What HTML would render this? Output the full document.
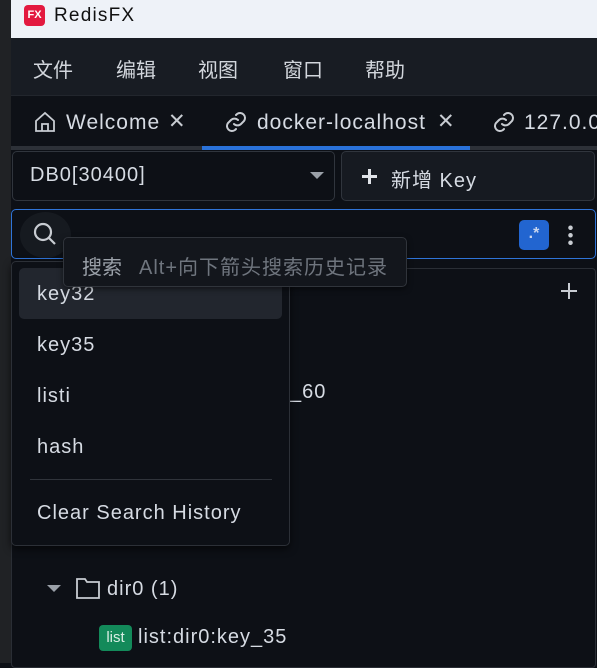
<!DOCTYPE html>
<html><head><meta charset="utf-8"><style>
*{box-sizing:border-box;margin:0;padding:0}
body{width:597px;height:663px;overflow:hidden;background:#0d1016;font-family:"Liberation Sans","Noto Sans CJK SC",sans-serif;color:#d6dbe3;position:relative}
.abs{position:absolute}
.t{font-size:20px;letter-spacing:1px}
</style></head><body>
<div class="abs" style="left:0;top:0;width:11px;height:663px;background:#202225"></div>
<div class="abs" style="left:11px;top:0;width:586px;height:38px;background:#eef2f8"></div>
<div class="abs" style="left:24px;top:5px;width:21px;height:21px;background:#e3193f;border-radius:4px;color:#fff;font-size:11px;font-weight:bold;text-align:center;line-height:21px">FX</div>
<div class="abs" style="left:54px;top:4px;font-size:19px;letter-spacing:1.2px;color:#111;line-height:24px">RedisFX</div>
<div class="abs" style="left:11px;top:38px;width:586px;height:57px;background:#181c23;font-size:20px;color:#d2d6dc">
<span class="abs" style="left:22px;top:16px">文件</span><span class="abs" style="left:105px;top:16px">编辑</span><span class="abs" style="left:187px;top:16px">视图</span><span class="abs" style="left:272px;top:16px">窗口</span><span class="abs" style="left:354px;top:16px">帮助</span></div>
<div class="abs" style="left:11px;top:95px;width:586px;height:52px;background:#0e1117;border-top:1px solid #22262d"></div>
<div class="abs" style="left:11px;top:146px;width:586px;height:4px;background:#2d3138"></div>
<div class="abs" style="left:202px;top:146px;width:268px;height:4px;background:#2a72d9"></div>
<svg class="abs" style="left:33px;top:110px" width="24" height="24" viewBox="0 0 24 24" fill="none" stroke="#c8ccd2" stroke-width="1.8"><path d="M3 11L12 3l9 8v10H3z M9 21v-7h6v7"/></svg>
<div class="abs t" style="left:66px;top:111px;font-size:21px">Welcome</div>
<div class="abs" style="left:168px;top:109px;font-size:21px;color:#c8ccd2">✕</div>
<svg class="abs" style="left:224px;top:110px" width="24" height="24" viewBox="0 0 24 24" fill="none" stroke="#c8ccd2" stroke-width="2" stroke-linecap="round"><path d="M10 14a5 5 0 0 0 7 0l3-3a5 5 0 0 0-7-7l-1 1M14 10a5 5 0 0 0-7 0l-3 3a5 5 0 0 0 7 7l1-1"/></svg>
<div class="abs t" style="left:257px;top:111px;font-size:21px">docker-localhost</div>
<div class="abs" style="left:437px;top:109px;font-size:21px;color:#c8ccd2">✕</div>
<svg class="abs" style="left:492px;top:110px" width="24" height="24" viewBox="0 0 24 24" fill="none" stroke="#c8ccd2" stroke-width="2" stroke-linecap="round"><path d="M10 14a5 5 0 0 0 7 0l3-3a5 5 0 0 0-7-7l-1 1M14 10a5 5 0 0 0-7 0l-3 3a5 5 0 0 0 7 7l1-1"/></svg>
<div class="abs t" style="left:524px;top:111px;font-size:21px">127.0.0</div>
<div class="abs" style="left:12px;top:151px;width:323px;height:50px;border:1px solid #30353d;border-radius:5px;background:#0d1016"></div>
<div class="abs t" style="left:30px;top:164px">DB0[30400]</div>
<div class="abs" style="left:310px;top:172px;width:0;height:0;border-left:7px solid transparent;border-right:7px solid transparent;border-top:7px solid #9aa0a8"></div>
<div class="abs" style="left:341px;top:151px;width:254px;height:50px;border:1px solid #30353d;border-radius:5px;background:#161a21"></div>
<div class="abs" style="left:362px;top:175px;width:15px;height:3px;background:#e0e3e8"></div>
<div class="abs" style="left:368px;top:169px;width:3px;height:15px;background:#e0e3e8"></div>
<div class="abs t" style="left:391px;top:164px">新增 Key</div>
<div class="abs" style="left:11px;top:209px;width:585px;height:50px;border:1px solid #2f74d8;border-radius:5px;background:#0d1016"></div>
<div class="abs" style="left:20px;top:212px;width:51px;height:46px;border-radius:50%;background:#161a20"></div>
<svg class="abs" style="left:32px;top:221px" width="26" height="26" viewBox="0 0 26 26" fill="none" stroke="#c8ccd2" stroke-width="2.2"><circle cx="11" cy="11" r="8"/><path d="M17 17l6 6"/></svg>
<div class="abs" style="left:519px;top:220px;width:30px;height:30px;background:#2265d0;border-radius:5px;color:#c9d6ef;font-size:16px;font-weight:bold;text-align:center;line-height:28px">.*</div>
<div class="abs" style="left:568px;top:224px;width:5px;height:22px;background:radial-gradient(circle,#c8ccd2 2px,transparent 2.5px) 0 0/5px 7.5px"></div>
<div class="abs" style="left:11px;top:268px;width:585px;height:400px;border:1px solid #2a2e35;border-radius:4px;background:#0d1016"></div>
<div class="abs" style="left:561px;top:290px;width:16px;height:2px;background:#c8ccd2"></div>
<div class="abs" style="left:568px;top:283px;width:2px;height:16px;background:#c8ccd2"></div>
<div class="abs t" style="left:290px;top:381px">_60</div>
<div class="abs" style="left:47px;top:585px;width:0;height:0;border-left:7px solid transparent;border-right:7px solid transparent;border-top:7px solid #9aa0a8"></div>
<svg class="abs" style="left:75px;top:576px" width="26" height="24" viewBox="0 0 26 24" fill="none" stroke="#c8ccd2" stroke-width="1.8"><path d="M2 3h8l2 3h12v16H2z"/></svg>
<div class="abs t" style="left:107px;top:578px">dir0 (1)</div>
<div class="abs" style="left:99px;top:625px;width:33px;height:26px;background:#138a5a;border-radius:4px;color:#d8eee4;font-size:15px;text-align:center;line-height:26px">list</div>
<div class="abs t" style="left:138px;top:626px">list:dir0:key_35</div>
<div class="abs" style="left:11px;top:261px;width:279px;height:285px;background:#0d1016;border:1px solid #2c3037;border-radius:5px;box-shadow:0 3px 8px rgba(0,0,0,.6)"></div>
<div class="abs" style="left:19px;top:268px;width:263px;height:51px;background:#22262e;border-radius:5px"></div>
<div class="abs t" style="left:37px;top:283px">key32</div>
<div class="abs t" style="left:37px;top:334px">key35</div>
<div class="abs t" style="left:37px;top:385px">listi</div>
<div class="abs t" style="left:37px;top:436px">hash</div>
<div class="abs" style="left:30px;top:479px;width:242px;height:1px;background:#30343b"></div>
<div class="abs t" style="left:37px;top:502px">Clear Search History</div>
<div class="abs" style="left:63px;top:237px;width:344px;height:50px;background:#13161c;border:1px solid #30343b;border-radius:5px;box-shadow:0 2px 6px rgba(0,0,0,.5)"></div>
<div class="abs" style="left:82px;top:251px;font-size:20px;color:#9ba1a9;white-space:nowrap">搜索<span style="color:#6f757e;margin-left:17px;letter-spacing:1px">Alt+向下箭头搜索历史记录</span></div>
</body></html>
